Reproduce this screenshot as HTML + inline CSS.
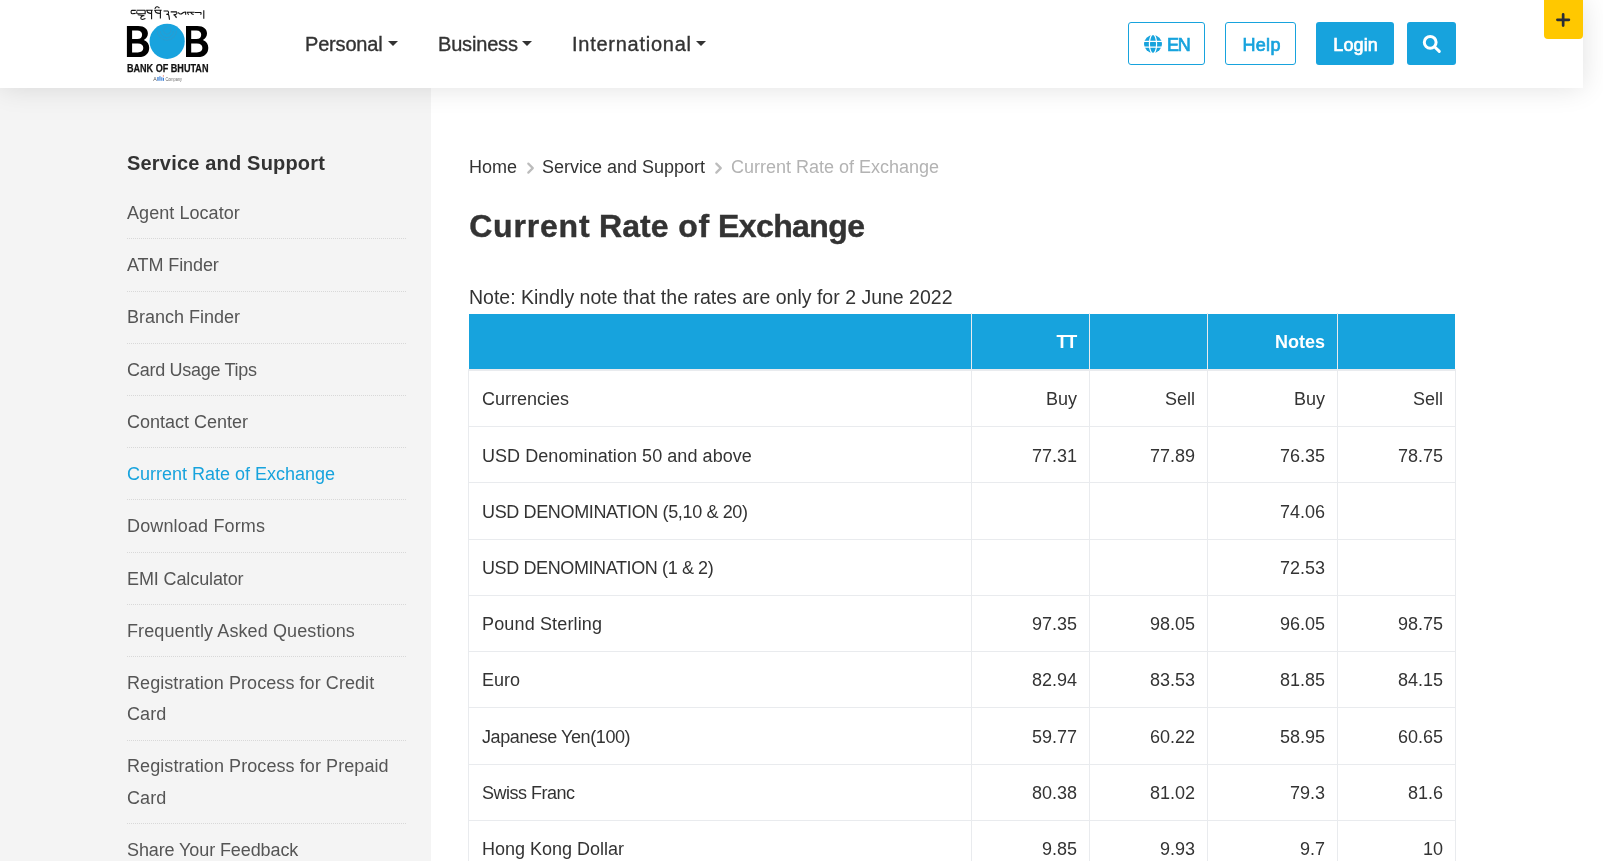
<!DOCTYPE html>
<html>
<head>
<meta charset="utf-8">
<style>
html,body{margin:0;padding:0;}
body{width:1603px;height:861px;overflow:hidden;background:#fff;position:relative;font-family:"Liberation Sans",sans-serif;color:#333;}
#pg{position:absolute;left:0;top:0;width:1603px;height:861px;will-change:transform;}
.side{position:absolute;left:0;top:0;width:431px;height:861px;background:#f4f4f4;}
.hdr{position:absolute;left:0;top:0;width:1583px;height:88px;background:#fff;box-shadow:0 0 26px rgba(0,0,0,0.12);z-index:5;}
.logo{position:absolute;left:0;top:0;}
.nv{position:absolute;top:30px;font-size:20px;line-height:28px;color:#333;white-space:nowrap;-webkit-text-stroke:0.35px #333;}
.caret{position:absolute;top:41px;width:0;height:0;border-left:5px solid transparent;border-right:5px solid transparent;border-top:5px solid #333;}
.btn{position:absolute;top:22px;height:43px;box-sizing:border-box;border-radius:3px;}
.ob{border:1px solid #17a3dd;background:#fff;}
.fb{background:#17a3dd;}
.bt{position:absolute;top:32.5px;font-size:18px;font-weight:normal;-webkit-text-stroke:0.7px currentColor;line-height:24px;white-space:nowrap;}
.plus{position:absolute;left:1544px;top:0;width:39px;height:39px;background:#ffc800;border-radius:0 0 4px 4px;z-index:6;}
.sh{position:absolute;left:127px;top:148px;font-size:20px;font-weight:bold;color:#333;line-height:30px;white-space:nowrap;letter-spacing:0.19px;}
.menu{position:absolute;left:127px;top:187.1px;width:279px;margin:0;padding:0;list-style:none;}
.menu li{font-size:18px;line-height:31.24px;padding:10.9px 0 9.1px;border-bottom:1px dotted #d8d8d8;color:#555;}
.menu li.act{color:#17a3dd;}
.bc{position:absolute;top:154px;font-size:18px;line-height:26px;white-space:nowrap;color:#333;}
.title{position:absolute;top:206px;font-size:32px;font-weight:bold;line-height:40px;white-space:nowrap;color:#333;-webkit-text-stroke:0.4px #333;}
.note{position:absolute;left:469px;top:284px;font-size:19.5px;line-height:26px;white-space:nowrap;color:#333;}
.tht{position:absolute;font-size:18px;font-weight:bold;color:#fff;line-height:55px;white-space:nowrap;}
.tdt{position:absolute;font-size:18px;color:#333;line-height:55px;white-space:nowrap;}
</style>
</head>
<body>
<div id="pg">
<div class="side"></div>
<div class="hdr">
  <svg class="logo" width="220" height="88" viewBox="0 0 220 88">
    <g fill="#000">
      <path fill-rule="evenodd" d="M126.9,25.9 H138.2 C144.6,25.9 147.9,29 147.9,33.6 C147.9,36.6 146.3,38.8 143.8,39.9 C147.3,41 149.2,44 149.2,47.8 C149.2,53.6 145.3,57.1 138.8,57.1 H126.9 Z M132.1,30.4 V39.1 H137.2 C140.5,39.1 142.1,37.6 142.1,34.8 C142.1,32 140.5,30.4 137.2,30.4 Z M132.1,43.6 V52.4 H137.8 C141.4,52.4 143.3,50.7 143.3,48 C143.3,45.3 141.4,43.6 137.8,43.6 Z"/>
      <path fill-rule="evenodd" d="M186,25.9 H197.3 C203.7,25.9 207,29 207,33.6 C207,36.6 205.4,38.8 202.9,39.9 C206.4,41 208.3,44 208.3,47.8 C208.3,53.6 204.4,57.1 197.9,57.1 H186 Z M191.2,30.4 V39.1 H196.3 C199.6,39.1 201.2,37.6 201.2,34.8 C201.2,32 199.6,30.4 196.3,30.4 Z M191.2,43.6 V52.4 H196.9 C200.5,52.4 202.4,50.7 202.4,48 C202.4,45.3 200.5,43.6 196.9,43.6 Z"/>
    </g>
    <circle cx="167.15" cy="41.35" r="17.6" fill="#18a3de"/>
    <g fill="none" stroke="#4d8fb6" stroke-width="0.5" opacity="0.75">
      <path d="M168.2,25.3 C167,26.5 165.6,27 164.6,28 A3.6,3.6 0 1 0 169.9,28.3"/>
      <path d="M160.3,31 A6.6,6.6 0 0 0 173.5,31"/>
      <path d="M157.2,30.5 A9.7,9.7 0 0 0 176.6,30.5"/>
    </g>
    <text x="126.9" y="71.8" font-family="Liberation Sans" font-weight="bold" font-size="10.6" textLength="81.6" lengthAdjust="spacingAndGlyphs" fill="#111" stroke="#111" stroke-width="0.25">BANK OF BHUTAN</text>
    <text x="153.2" y="80.8" font-family="Liberation Sans" font-size="5.2" fill="#555">A</text>
    <g fill="#3b7fd6"><rect x="157.3" y="77" width="1.3" height="3.8"/><rect x="159.4" y="76.2" width="1.1" height="4.6"/><rect x="161.3" y="77.2" width="1" height="3.6"/><rect x="162.9" y="77.8" width="1.1" height="3"/></g>
    <circle cx="163.4" cy="75.9" r="0.6" fill="#ec6a5a"/>
    <text x="165.5" y="80.8" font-family="Liberation Sans" font-size="5.2" textLength="16.3" lengthAdjust="spacingAndGlyphs" fill="#666">Company</text>
    <g transform="translate(124,2) scale(0.05495)" fill="none" stroke="#111" stroke-width="20" stroke-linejoin="round">
      <path d="M215,152 H145 C122,152 122,212 150,215 L212,207"/>
      <path d="M228,150 H388 M385,150 V215 H238 M232,168 V215"/>
      <path d="M252,232 L372,250 M345,250 C295,270 292,312 335,318 L390,302"/>
      <path d="M402,150 H522 M502,150 V312 M420,152 C418,182 428,208 502,208"/>
      <path d="M548,150 H685 M662,150 V302 M568,152 C566,182 578,208 662,208"/>
      <path d="M562,125 C575,85 615,70 645,112"/>
      <path d="M720,165 H800 C822,185 812,225 770,225 M800,200 C818,240 826,280 828,322"/>
      <path d="M850,180 H955 C975,200 968,232 900,232 M905,232 C930,248 960,268 948,292"/>
      <path d="M992,188 C992,228 1040,226 1068,200 C1090,182 1110,182 1122,182 V232"/>
      <path d="M1142,186 H1282 M1160,186 C1158,210 1165,230 1180,232 M1210,186 C1230,215 1250,228 1268,228"/>
      <path d="M1285,190 H1400 C1405,205 1400,225 1395,232"/>
      <path d="M1452,150 V305"/>
    </g>
    </svg>
  <div class="nv" style="left:305px;letter-spacing:-0.18px">Personal</div><i class="caret" style="left:388px"></i>
  <div class="nv" style="left:438px;letter-spacing:-0.18px">Business</div><i class="caret" style="left:522px"></i>
  <div class="nv" style="left:572px;letter-spacing:0.74px">International</div><i class="caret" style="left:696px"></i>
  <div class="btn ob" style="left:1128px;width:77px"></div>
  <svg style="position:absolute;left:1144.2px;top:34.9px" width="18" height="18" viewBox="0 0 18 18">
    <circle cx="9" cy="9" r="9" fill="#17a3dd"/>
    <g fill="none" stroke="#fff" stroke-width="1.2">
      <path d="M0,6.3 H18 M0,12.2 H18"/>
      <ellipse cx="9" cy="9" rx="3.6" ry="9.6"/>
    </g>
  </svg>
  <div class="bt" style="left:1167px;color:#17a3dd;letter-spacing:-1.3px">EN</div>
  <div class="btn ob" style="left:1225px;width:71px"></div>
  <div class="bt" style="left:1242.5px;color:#17a3dd;letter-spacing:0.3px">Help</div>
  <div class="btn fb" style="left:1316px;width:78px"></div>
  <div class="bt" style="left:1333.3px;color:#fff;letter-spacing:0.1px">Login</div>
  <div class="btn fb" style="left:1407px;width:49px"></div>
  <svg style="position:absolute;left:1407px;top:22px" width="49" height="43" viewBox="0 0 49 43">
    <circle cx="23.2" cy="20.35" r="5.9" fill="none" stroke="#fff" stroke-width="3"/>
    <path d="M28,25.2 L32.3,29.4" stroke="#fff" stroke-width="3" stroke-linecap="round"/>
  </svg>
</div>
<div class="plus"><svg width="39" height="39" viewBox="0 0 39 39"><path d="M19.15,14.4 V25.6 M13.4,19.85 H24.9" stroke="#2a2d36" stroke-width="2.7" stroke-linecap="round"/></svg></div>

<div class="sh">Service and Support</div>
<ul class="menu">
<li style="letter-spacing:0.06px">Agent Locator</li>
<li style="letter-spacing:-0.1px">ATM Finder</li>
<li>Branch Finder</li>
<li style="letter-spacing:-0.29px">Card Usage Tips</li>
<li>Contact Center</li>
<li class=act>Current Rate of Exchange</li>
<li style="letter-spacing:0.15px">Download Forms</li>
<li style="letter-spacing:-0.11px">EMI Calculator</li>
<li style="letter-spacing:0.11px">Frequently Asked Questions</li>
<li style="letter-spacing:0.07px">Registration Process for Credit Card</li>
<li style="letter-spacing:0.08px">Registration Process for Prepaid Card</li>
<li style="letter-spacing:-0.1px">Share Your Feedback</li>
</ul>

<div class="bc" style="left:469px">Home</div><svg style="position:absolute;left:520px;top:158px" width="20" height="20"><path d="M8.3,5.6 L12.8,10.1 L8.3,14.6" fill="none" stroke="#bcbcbc" stroke-width="2.2" stroke-linecap="round" stroke-linejoin="round"/></svg>
<div class="bc" style="left:542px">Service and Support</div><svg style="position:absolute;left:708px;top:158px" width="20" height="20"><path d="M8.3,5.6 L12.8,10.1 L8.3,14.6" fill="none" stroke="#bcbcbc" stroke-width="2.2" stroke-linecap="round" stroke-linejoin="round"/></svg>
<div class="bc" style="left:731px;color:#b3b3b3">Current Rate of Exchange</div>
<div class="title" style="left:469.2px;letter-spacing:0.8px">Current</div><div class="title" style="left:599px;letter-spacing:0.1px">Rate</div><div class="title" style="left:678.3px;letter-spacing:0.6px">of</div><div class="title" style="left:718px;letter-spacing:-0.6px">Exchange</div>
<div class="note">Note: Kindly note that the rates are only for 2 June 2022</div>
<div style="position:absolute;left:469px;top:314px;width:986px;height:55px;background:#17a3dd"></div>
<div style="position:absolute;left:971px;top:313px;width:1px;height:57px;background:#e9ebee"></div>
<div style="position:absolute;left:1089px;top:313px;width:1px;height:57px;background:#e9ebee"></div>
<div style="position:absolute;left:1207px;top:313px;width:1px;height:57px;background:#e9ebee"></div>
<div style="position:absolute;left:1337px;top:313px;width:1px;height:57px;background:#e9ebee"></div>
<div style="position:absolute;left:468px;top:369px;width:988px;height:2px;background:#e9ebee"></div>
<div style="position:absolute;left:468px;top:426px;width:988px;height:1px;background:#e9ebee"></div>
<div style="position:absolute;left:468px;top:482px;width:988px;height:1px;background:#e9ebee"></div>
<div style="position:absolute;left:468px;top:539px;width:988px;height:1px;background:#e9ebee"></div>
<div style="position:absolute;left:468px;top:595px;width:988px;height:1px;background:#e9ebee"></div>
<div style="position:absolute;left:468px;top:651px;width:988px;height:1px;background:#e9ebee"></div>
<div style="position:absolute;left:468px;top:707px;width:988px;height:1px;background:#e9ebee"></div>
<div style="position:absolute;left:468px;top:764px;width:988px;height:1px;background:#e9ebee"></div>
<div style="position:absolute;left:468px;top:820px;width:988px;height:1px;background:#e9ebee"></div>
<div style="position:absolute;left:468px;top:369px;width:1px;height:492px;background:#e9ebee"></div>
<div style="position:absolute;left:971px;top:369px;width:1px;height:492px;background:#e9ebee"></div>
<div style="position:absolute;left:1089px;top:369px;width:1px;height:492px;background:#e9ebee"></div>
<div style="position:absolute;left:1207px;top:369px;width:1px;height:492px;background:#e9ebee"></div>
<div style="position:absolute;left:1337px;top:369px;width:1px;height:492px;background:#e9ebee"></div>
<div style="position:absolute;left:1455px;top:369px;width:1px;height:492px;background:#e9ebee"></div>
<div class="tht" style="right:527px;top:315px;letter-spacing:-1.3px">TT</div>
<div class="tht" style="right:278px;top:315px">Notes</div>
<div class="tdt" style="left:482px;top:372px">Currencies</div>
<div class="tdt" style="right:526px;top:372px">Buy</div>
<div class="tdt" style="right:408px;top:372px">Sell</div>
<div class="tdt" style="right:278px;top:372px">Buy</div>
<div class="tdt" style="right:160px;top:372px">Sell</div>
<div class="tdt" style="left:482px;top:429px;letter-spacing:0.06px">USD Denomination 50 and above</div>
<div class="tdt" style="right:526px;top:429px">77.31</div>
<div class="tdt" style="right:408px;top:429px">77.89</div>
<div class="tdt" style="right:278px;top:429px">76.35</div>
<div class="tdt" style="right:160px;top:429px">78.75</div>
<div class="tdt" style="left:482px;top:485px;letter-spacing:-0.36px">USD DENOMINATION (5,10 &amp; 20)</div>
<div class="tdt" style="right:278px;top:485px">74.06</div>
<div class="tdt" style="left:482px;top:541px;letter-spacing:-0.39px">USD DENOMINATION (1 &amp; 2)</div>
<div class="tdt" style="right:278px;top:541px">72.53</div>
<div class="tdt" style="left:482px;top:597px;letter-spacing:0.15px">Pound Sterling</div>
<div class="tdt" style="right:526px;top:597px">97.35</div>
<div class="tdt" style="right:408px;top:597px">98.05</div>
<div class="tdt" style="right:278px;top:597px">96.05</div>
<div class="tdt" style="right:160px;top:597px">98.75</div>
<div class="tdt" style="left:482px;top:653px">Euro</div>
<div class="tdt" style="right:526px;top:653px">82.94</div>
<div class="tdt" style="right:408px;top:653px">83.53</div>
<div class="tdt" style="right:278px;top:653px">81.85</div>
<div class="tdt" style="right:160px;top:653px">84.15</div>
<div class="tdt" style="left:482px;top:710px;letter-spacing:-0.41px">Japanese Yen(100)</div>
<div class="tdt" style="right:526px;top:710px">59.77</div>
<div class="tdt" style="right:408px;top:710px">60.22</div>
<div class="tdt" style="right:278px;top:710px">58.95</div>
<div class="tdt" style="right:160px;top:710px">60.65</div>
<div class="tdt" style="left:482px;top:766px;letter-spacing:-0.5px">Swiss Franc</div>
<div class="tdt" style="right:526px;top:766px">80.38</div>
<div class="tdt" style="right:408px;top:766px">81.02</div>
<div class="tdt" style="right:278px;top:766px">79.3</div>
<div class="tdt" style="right:160px;top:766px">81.6</div>
<div class="tdt" style="left:482px;top:822px">Hong Kong Dollar</div>
<div class="tdt" style="right:526px;top:822px">9.85</div>
<div class="tdt" style="right:408px;top:822px">9.93</div>
<div class="tdt" style="right:278px;top:822px">9.7</div>
<div class="tdt" style="right:160px;top:822px">10</div>
</div>
</body>
</html>
